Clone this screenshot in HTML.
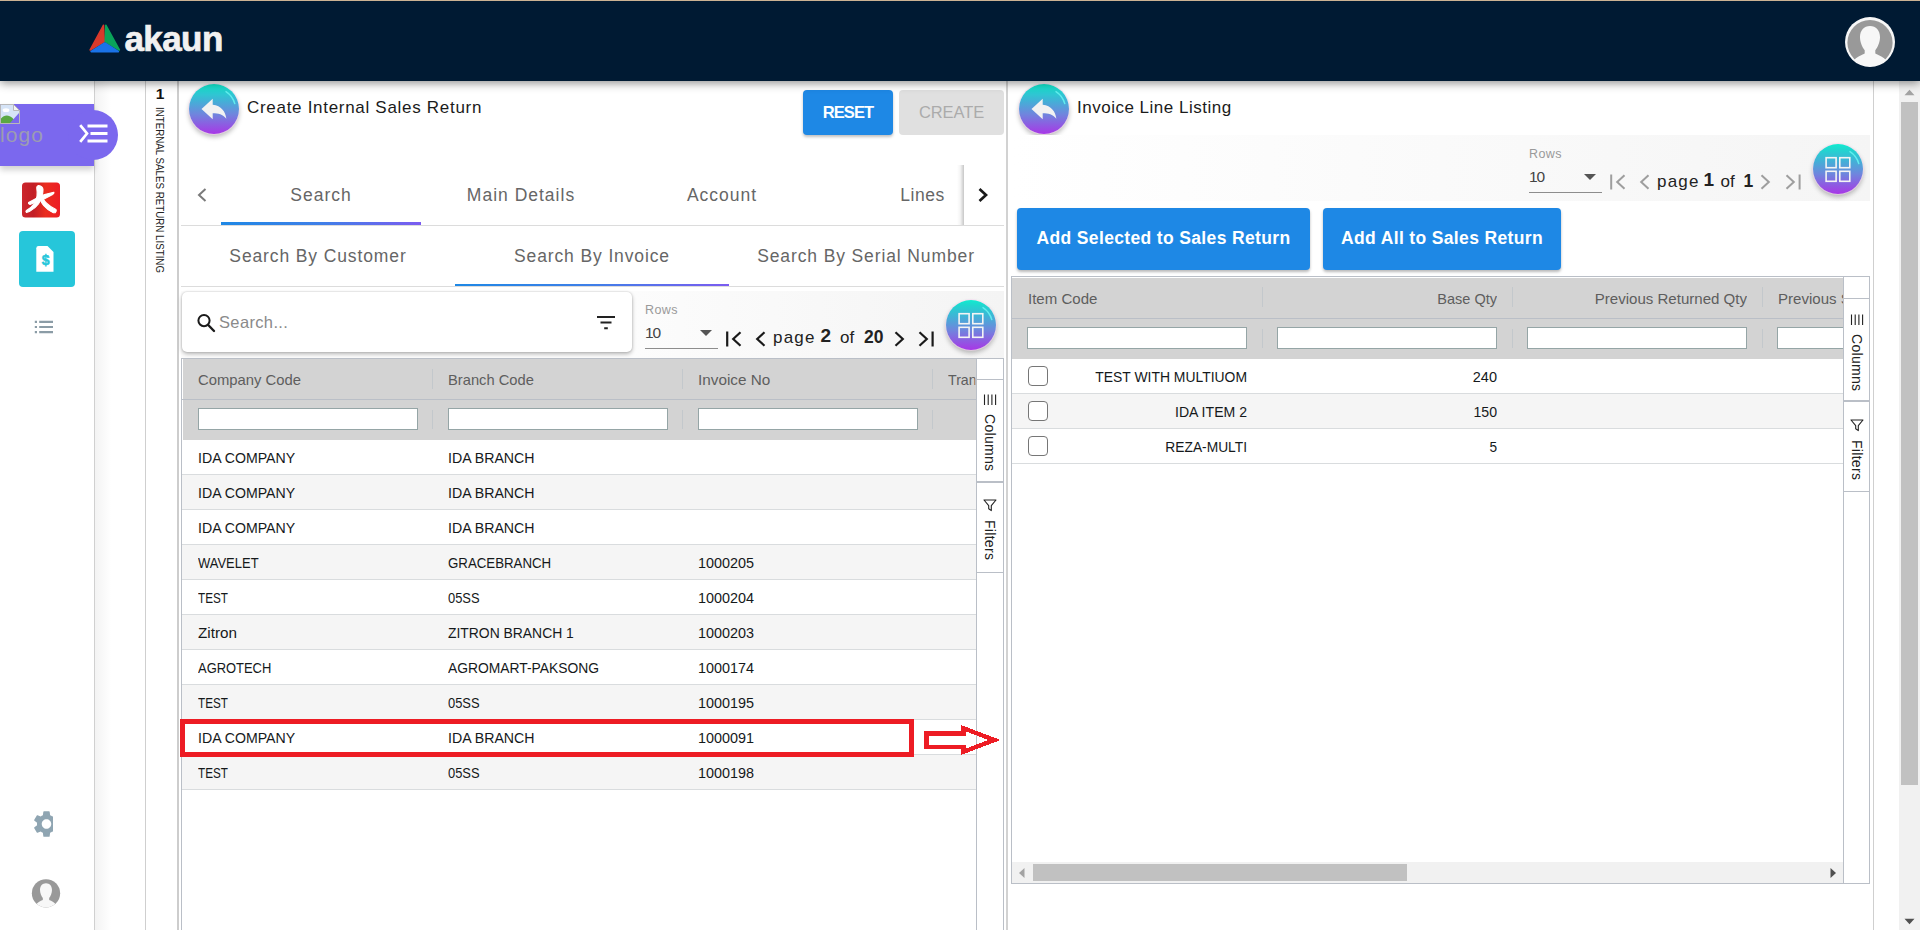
<!DOCTYPE html>
<html lang="en">
<head>
<meta charset="utf-8">
<title>Create Internal Sales Return</title>
<style>
*{box-sizing:border-box;margin:0;padding:0}
html,body{width:1920px;height:930px;overflow:hidden;background:#fff}
body{font-family:"Liberation Sans",sans-serif;color:#1a1a1a;position:relative}
.abs{position:absolute}
/* header */
#hdr{position:absolute;left:0;top:0;width:1920px;height:81px;background:#001a33;border-top:1px solid #cbb293;box-shadow:0 2px 9px rgba(0,0,0,.45);z-index:20}
#brand{position:absolute;left:124.5px;top:16px;font-weight:bold;font-size:35px;line-height:44px;color:#f1f1f1;letter-spacing:-.6px;-webkit-text-stroke:.7px #f1f1f1}
/* sidebar */
#side{position:absolute;left:0;top:81px;width:95px;height:849px;background:#fff;border-right:1px solid #d0d0d0}
#col2{position:absolute;left:95px;top:81px;width:51px;height:849px;background:linear-gradient(90deg,#f3f3f3 0,#fff 16px);border-right:1px solid #cfcfcf}
#col3{position:absolute;left:146px;top:81px;width:33px;height:849px;background:#fff;border-right:2px solid #cdcdcd}
#purple{position:absolute;left:0;top:104px;width:94px;height:62px;background:#7b68ee;box-shadow:0 4px 6px rgba(0,0,0,.18)}
#purpleR{position:absolute;left:68px;top:110px;width:50px;height:50px;border-radius:25px;background:#7b68ee}
.vtxt{position:absolute;writing-mode:vertical-rl;white-space:nowrap}
/* panels */
.circle{position:absolute;width:50px;height:50px;border-radius:50%;background:linear-gradient(180deg,#10ecd0 0%,#1fd8cf 10%,#3fb4d6 32%,#6f86dd 60%,#a837e6 100%);box-shadow:0 0 0 1px rgba(245,215,240,.55),0 3px 5px rgba(0,0,0,.28)}
.title{position:absolute;font-size:17px;line-height:24px;color:#1b1b1b;white-space:nowrap}
.btn{position:absolute;border-radius:4px;font-weight:bold;text-align:center;white-space:nowrap}
.tab{position:absolute;text-align:center;color:#666;font-size:17.5px;white-space:nowrap;letter-spacing:1px}
/* grid */
.grid{position:absolute;border:1px solid #babfc7;background:#fff;overflow:hidden}
.ghead{position:absolute;left:0;top:0;background:#d3d3d3}
.hcell{position:absolute;top:0;height:40px;line-height:42px;font-size:14.5px;color:#5e5e5e;white-space:nowrap;overflow:hidden}
.sep{position:absolute;width:1px;background:#c3c8cc}
.finp{position:absolute;height:22px;background:#fff;border:1px solid #95a5a6}
.row{position:absolute;left:0;height:35px;border-bottom:1px solid #d9dcde;font-size:14.5px;line-height:36px;color:#15191b;white-space:nowrap}
.row.odd{background:#f5f5f5}
.row span{position:absolute;top:0}
.cb{position:absolute;left:16px;top:7px;width:20px;height:20px;border:1.5px solid #767676;border-radius:4px;background:#fff}
.sidep{position:absolute;top:0;width:27px;background:#fff;border-left:1px solid #babfc7}
.sbtn{position:absolute;left:0;width:26px;border-bottom:1px solid #babfc7}
.pgtxt{position:absolute;font-size:17px;line-height:22px;color:#222;white-space:nowrap}
</style>
</head>
<body>
<!-- HEADER -->
<div id="hdr">
  <svg class="abs" style="left:88.75px;top:23.3px" width="32.5" height="31" viewBox="0 0 34 31" preserveAspectRatio="none">
    <path d="M15.2 1.2 L1.2 26.0 L16.0 17.6 Z" fill="#d93a2b" stroke="#d93a2b" stroke-width="1.6" stroke-linejoin="round"/>
    <path d="M17.6 1.2 L31.8 26.0 L17.0 17.6 Z" fill="#0aa45a" stroke="#0aa45a" stroke-width="1.6" stroke-linejoin="round"/>
    <path d="M16.5 19.2 L2.4 27.6 L30.6 27.6 Z" fill="#1a73e8" stroke="#1a73e8" stroke-width="2" stroke-linejoin="round"/>
  </svg>
  <div id="brand">akaun</div>
  <svg class="abs" style="left:1845px;top:16px" width="50" height="50" viewBox="0 0 50 50">
    <defs><clipPath id="avc"><circle cx="25" cy="25" r="24.2"/></clipPath></defs>
    <circle cx="25" cy="25" r="25" fill="#f7f7f7"/>
    <circle cx="25" cy="25.7" r="22.6" fill="#999"/>
    <path clip-path="url(#avc)" fill="#f7f7f7" d="M25 8.9 C31 8.9 35 13.5 35 20 C35 25.5 32.6 30.2 30.3 33.2 L30.3 36.6 C34.5 38.4 38.500 40.2 41.5 43.8 L41.5 52 L8.500 52 L8.500 43.8 C11.5 40.2 15.500 38.4 19.700 36.6 L19.700 33.2 C17.4 30.2 15 25.5 15 20 C15 13.5 19 8.9 25 8.9 Z"/>
  </svg>
</div>

<!-- SIDEBAR -->
<div id="side"></div>
<div id="col2"></div>
<div id="col3"></div>
<div id="purple"></div>
<div id="purpleR"></div>

<!-- SIDEBAR CONTENT -->
<svg class="abs" style="left:0;top:104px" width="20" height="20" viewBox="0 0 20 20">
 <path d="M0.5 0.5 H13.5 L19.5 6.5 V19.5 H0.5 Z" fill="#d6e4f7" stroke="#b9b9b9" stroke-width="1"/>
 <path d="M13.5 0.5 V6.5 H19.5 Z" fill="#f4f4f4" stroke="#b9b9b9" stroke-width="1" stroke-linejoin="round"/>
 <ellipse cx="6" cy="6.2" rx="3.4" ry="1.9" fill="#fff"/>
 <path d="M1 19 V14.5 C4 10.5 9 10.5 12.5 14 L17 19 Z" fill="#5aa843"/>
 <path d="M19 9 L10 19 H19 Z" fill="#7b68ee"/>
</svg>
<div class="abs" style="left:0;top:122px;font-size:21px;line-height:26px;color:#9c9cb2;letter-spacing:1.1px">logo</div>
<svg class="abs" style="left:78px;top:122px" width="32" height="24" viewBox="0 0 32 24">
 <path d="M2.2 3.2 L9 11.5 L2.2 19.8" fill="none" stroke="#fff" stroke-width="2.7"/>
 <path d="M9.5 4 H29.5 M12.5 11.5 H29.5 M9.5 19 H29.5" stroke="#fff" stroke-width="2.9" fill="none"/>
</svg>
<svg class="abs" style="left:22px;top:182px" width="38" height="36" viewBox="0 0 38 36">
 <defs><linearGradient id="rg" x1="0" y1="0" x2="1" y2="0"><stop offset="0" stop-color="#cc262c"/><stop offset=".3" stop-color="#c21e25"/><stop offset=".62" stop-color="#ea2d1f"/><stop offset="1" stop-color="#ed1c24"/></linearGradient></defs>
 <rect x="0" y="0.5" width="38" height="35" rx="3.5" fill="url(#rg)"/>
 <g fill="#fff" stroke="#fff" stroke-width="1.1" stroke-linejoin="round">
  <path d="M16.6 3.6 C19 4 20.8 5 21 7.5 C21.2 10.5 20.4 13 19.6 15.2 C18.8 17.6 18 19.8 16.6 21.8 C14.4 25 11.2 27.6 7.4 29.4 L4.4 30.4 C3.8 29.8 3.8 29 4.4 28.4 C7.400 26.8 10.2 24.4 12.4 21.2 C13.8 19 14.6 16.6 15 14 C15.3 11.6 15.2 9 14.8 6.600 C14.6 5.200 15.2 4 16.6 3.600 Z"/>
  <path d="M6.600 20.6 L14.6 16.2 C17.2 14.8 19.8 13.600 22.600 12.600 L31.800 10.2 C32.2 10.600 31.800 11.600 30.6 12.4 L23 16.4 C20.6 17.600 17.800 18.800 15 19.800 L8 22.4 C6.800 22.4 6.200 21.4 6.600 20.6 Z"/>
  <path d="M18 17.4 L21 16.4 C22 18.2 23.2 19.800 24.6 21.2 C27.2 23.800 30.4 26 34 27.400 C34.6 28.600 34.2 30 33.4 30.600 L31.4 30.800 C27.600 29 24.200 26.400 21.600 23.400 C20.400 22 19.200 20.200 18 17.400 Z"/>
 </g>
</svg>
<div class="abs" style="left:19px;top:231px;width:56px;height:56px;border-radius:4px;background:#26c6da"></div>
<svg class="abs" style="left:36px;top:246px" width="18" height="26" viewBox="0 0 18 26">
 <path d="M2.5 0 H11.5 L17.5 6 V25.8 H0.3 V2.2 Q0.3 0 2.5 0 Z" fill="#fff"/>
 <text x="9.6" y="19" text-anchor="middle" font-family="Liberation Sans, sans-serif" font-weight="bold" font-size="14" fill="#26c6da" stroke="#26c6da" stroke-width=".5">$</text>
</svg>
<svg class="abs" style="left:34px;top:320px" width="20" height="14" viewBox="0 0 20 14">
 <path d="M5.2 1.8 H19 M5.2 7 H19 M5.2 12.2 H19" stroke="#8b9ca6" stroke-width="2.2"/>
 <path d="M0.8 1.8 H3 M0.8 7 H3 M0.8 12.2 H3" stroke="#8b9ca6" stroke-width="2.2"/>
</svg>
<svg class="abs" style="left:31px;top:808px" width="22" height="32" viewBox="0 0 22 32">
 <path transform="translate(-0.34,0.16) scale(1.32)" fill="#8fa5b2" d="M19.14 12.94c.04-.3.06-.61.06-.94 0-.32-.02-.64-.07-.94l2.030-1.580c.18-.14.23-.41.12-.61l-1.920-3.320c-.12-.22-.37-.29-.59-.22l-2.390.96c-.5-.38-1.030-.7-1.620-.94l-.36-2.540c-.04-.24-.24-.41-.48-.41h-3.840c-.24 0-.43.17-.47.41l-.36 2.540c-.59.24-1.130.57-1.620.94l-2.390-.96c-.22-.08-.47 0-.59.22L2.740 8.870c-.12.21-.08.47.12.61l2.030 1.580c-.05.3-.09.63-.09.94s.02.64.07.94l-2.030 1.580c-.18.14-.23.41-.12.61l1.920 3.320c.12.22.37.29.59.22l2.390-.96c.5.38 1.030.7 1.620.94l.36 2.540c.05.24.24.41.48.41h3.840c.24 0 .44-.17.47-.41l.36-2.540c.59-.24 1.130-.56 1.620-.94l2.390.96c.22.08.47 0 .59-.22l1.920-3.320c.12-.22.07-.47-.12-.61l-2.010-1.580zM12 15.600c-1.980 0-3.600-1.620-3.600-3.600s1.620-3.600 3.600-3.600 3.600 1.620 3.600 3.600-1.620 3.600-3.600 3.600z"/>
</svg>
<svg class="abs" style="left:31px;top:877.500px" width="30" height="30" viewBox="0 0 50 50">
 <defs><clipPath id="uc"><circle cx="25" cy="25.5" r="23.6"/></clipPath></defs>
 <circle cx="25" cy="25.500" r="23.6" fill="#999"/>
 <path clip-path="url(#uc)" fill="#f7f7f7" d="M25 8.900 C31 8.900 35 13.500 35 20 C35 25.500 32.6 30.2 30.3 33.2 L30.3 36.6 C34.500 38.4 38.500 40.2 41.500 43.800 L41.500 52 L8.500 52 L8.500 43.800 C11.500 40.2 15.500 38.4 19.700 36.6 L19.700 33.2 C17.4 30.2 15 25.500 15 20 C15 13.500 19 8.900 25 8.900 Z"/>
</svg>
<div class="abs" style="left:154px;top:85px;width:12px;text-align:center;font-weight:bold;font-size:15.5px;line-height:18px;color:#111">1</div>
<div class="vtxt" style="left:153px;top:107px;font-size:11.5px;line-height:14px;color:#222;transform:scaleY(.848);transform-origin:50% 0">INTERNAL SALES RETURN LISTING</div>
<!-- LEFT PANEL -->
<div id="left">
  <div class="circle" style="left:189px;top:84px">
    <svg class="abs" style="left:0;top:0" width="50" height="50" viewBox="0 0 50 50">
      <path d="M37 7.6 A21.2 21.2 0 0 1 45.8 19.6" fill="none" stroke="#66f2f0" stroke-opacity=".9" stroke-width="1.5" stroke-linecap="round"/>
      <path fill="#f2f2f2" d="M23.7 20.8 V14.8 L12.5 24.9 L23.7 35.2 V29.2 C29.5 29.2 33.6 30.3 37.4 34.7 C36.2 27.5 32.5 21.8 23.7 20.8 Z"/>
    </svg>
  </div>
  <div class="title" style="left:247px;top:96px;letter-spacing:.7px">Create Internal Sales Return</div>
  <div class="btn" style="left:803px;top:90px;width:90px;height:45px;line-height:45px;background:#1e88e5;color:#fff;font-size:16.5px;letter-spacing:-.9px;box-shadow:0 2px 3px rgba(0,0,0,.25)">RESET</div>
  <div class="btn" style="left:899px;top:90px;width:105px;height:45px;line-height:45px;background:#e0e0e0;color:#ababab;font-size:16.5px;font-weight:normal;letter-spacing:-.1px">CREATE</div>

  <!-- main tabs -->
  <div class="abs" style="left:181px;top:225px;width:823px;height:1px;background:#dcdcdc"></div>
  <svg class="abs" style="left:194px;top:186px" width="16" height="18" viewBox="0 0 16 18"><path d="M11.5 3 L5 9 L11.5 15" fill="none" stroke="#7a7a7a" stroke-width="2"/></svg>
  <div class="tab" style="left:221px;top:184px;width:200px;line-height:22px">Search</div>
  <div class="tab" style="left:421px;top:184px;width:200px;line-height:22px">Main Details</div>
  <div class="tab" style="left:622px;top:184px;width:200px;line-height:22px">Account</div>
  <div class="tab" style="left:822.5px;top:184px;width:200px;line-height:22px;letter-spacing:.55px">Lines</div>
  <div class="abs" style="left:221px;top:222px;width:200px;height:3px;background:linear-gradient(90deg,#1e88e5 0%,#3f7fe8 50%,#7b5cf0 100%)"></div>
  <div class="abs" style="left:964px;top:165px;width:40px;height:60px;background:#fff"></div>
  <div class="abs" style="left:957px;top:165px;width:7px;height:60px;background:linear-gradient(90deg,rgba(0,0,0,0) 0%,rgba(0,0,0,.04) 45%,rgba(0,0,0,.22) 100%)"></div>
  <svg class="abs" style="left:975px;top:186px" width="16" height="18" viewBox="0 0 16 18"><path d="M4.5 3 L11 9 L4.5 15" fill="none" stroke="#1a1a1a" stroke-width="2.7"/></svg>

  <!-- sub tabs -->
  <div class="abs" style="left:181px;top:286px;width:823px;height:1px;background:#dcdcdc"></div>
  <div class="tab" style="left:181px;top:245px;width:274px;line-height:22px;letter-spacing:.88px">Search By Customer</div>
  <div class="tab" style="left:455px;top:245px;width:274px;line-height:22px;letter-spacing:.88px">Search By Invoice</div>
  <div class="tab" style="left:729px;top:245px;width:274px;line-height:22px;letter-spacing:.88px">Search By Serial Number</div>
  <div class="abs" style="left:455px;top:284px;width:274px;height:2px;background:linear-gradient(90deg,#1e88e5 0%,#3f7fe8 50%,#7b5cf0 100%)"></div>

  <!-- search + pagination strip -->
  <div class="abs" style="left:181px;top:291px;width:823px;height:67px;background:linear-gradient(90deg,#fcfcfc 0%,#fcfcfc 55%,#f4f4f4 100%)"></div>
  <div class="abs" style="left:182px;top:292px;width:450px;height:60px;background:#fff;border-radius:5px;box-shadow:0 2px 4px rgba(0,0,0,.28),0 0 2px rgba(0,0,0,.18)"></div>
  <svg class="abs" style="left:195px;top:312px" width="22" height="22" viewBox="0 0 22 22"><circle cx="9" cy="8.6" r="5.6" fill="none" stroke="#1a1a1a" stroke-width="2"/><path d="M13.2 13 L19 19" stroke="#1a1a1a" stroke-width="2.4" stroke-linecap="round"/></svg>
  <div class="abs" style="left:219px;top:311px;font-size:16.5px;line-height:22px;color:#8a8a8a;letter-spacing:.35px">Search...</div>
  <svg class="abs" style="left:596px;top:315px" width="20" height="16" viewBox="0 0 20 16"><path d="M1 2 H19 M4.5 7.6 H15.5 M8.2 13.2 H11.8" stroke="#222" stroke-width="2" fill="none"/></svg>

  <div class="abs" style="left:645px;top:303px;font-size:12.5px;line-height:14px;color:#9a9a9a;letter-spacing:.4px">Rows</div>
  <div class="abs" style="left:645px;top:324px;font-size:15.5px;line-height:18px;color:#444;letter-spacing:-1px">10</div>
  <svg class="abs" style="left:699px;top:329.2px" width="14" height="8" viewBox="0 0 14 8"><path d="M1 1 H13 L7 7 Z" fill="#555"/></svg>
  <div class="abs" style="left:645px;top:348px;width:73px;height:1px;background:#8d8d8d"></div>

  <svg class="abs" style="left:724.5px;top:328.5px" width="20" height="20" viewBox="0 0 20 20"><path d="M2.2 2.5 V17.5" stroke="#1a1a1a" stroke-width="2.2"/><path d="M15.5 3.2 L8.2 10 L15.5 16.8" fill="none" stroke="#1a1a1a" stroke-width="2.2"/></svg>
  <svg class="abs" style="left:752px;top:328.5px" width="16" height="20" viewBox="0 0 16 20"><path d="M12.5 3.2 L5.2 10 L12.5 16.8" fill="none" stroke="#1a1a1a" stroke-width="2.2"/></svg>
  <div class="pgtxt" style="left:773px;top:327px;letter-spacing:1.2px">page</div>
  <div class="pgtxt" style="left:820.5px;top:325px;font-weight:bold;font-size:19px">2</div>
  <div class="pgtxt" style="left:840px;top:327px">of</div>
  <div class="pgtxt" style="left:864px;top:326px;font-weight:bold;font-size:17.5px">20</div>
  <svg class="abs" style="left:891.7px;top:328.5px" width="16" height="20" viewBox="0 0 16 20"><path d="M3.5 3.2 L10.8 10 L3.5 16.8" fill="none" stroke="#1a1a1a" stroke-width="2.2"/></svg>
  <svg class="abs" style="left:914.5px;top:328.5px" width="20" height="20" viewBox="0 0 20 20"><path d="M17.6 2.5 V17.5" stroke="#1a1a1a" stroke-width="2.2"/><path d="M4.5 3.2 L11.8 10 L4.5 16.8" fill="none" stroke="#1a1a1a" stroke-width="2.2"/></svg>

  <div class="circle" style="left:946px;top:299.5px">
    <svg class="abs" style="left:0;top:0" width="50" height="50" viewBox="0 0 50 50">
      <path d="M37 7.6 A21.2 21.2 0 0 1 45.8 19.6" fill="none" stroke="#66f2f0" stroke-opacity=".9" stroke-width="1.5" stroke-linecap="round"/>
      <g fill="none" stroke="#f4f4f4" stroke-width="1.6"><rect x="13.1" y="13.7" width="10" height="10"/><rect x="26.8" y="13.7" width="10" height="10"/><rect x="13.1" y="27.3" width="10" height="10"/><rect x="26.8" y="27.3" width="10" height="10"/></g>
    </svg>
  </div>
</div>
<!-- LEFT GRID -->
<div class="grid" id="lgrid" style="left:181px;top:358px;width:823px;height:600px">
 <div class="ghead" style="left:1px;width:793px;height:81px"></div>
 <div class="abs" style="left:0;top:40px;width:794px;height:1px;background:#babfc7"></div>
 <div class="hcell" style="left:16px;width:230px;transform:scaleX(1.022);transform-origin:0 50%">Company Code</div>
 <div class="hcell" style="left:266px;width:230px;transform:scaleX(1.014);transform-origin:0 50%">Branch Code</div>
 <div class="hcell" style="left:516px;width:230px;transform:scaleX(1.055);transform-origin:0 50%">Invoice No</div>
 <div class="hcell" style="left:766px;width:28px;transform:scaleX(0.977);transform-origin:0 50%">Tran</div>
 <div class="sep" style="left:250px;top:10px;height:20px"></div>
 <div class="sep" style="left:250px;top:51px;height:19px"></div>
 <div class="sep" style="left:500px;top:10px;height:20px"></div>
 <div class="sep" style="left:500px;top:51px;height:19px"></div>
 <div class="sep" style="left:750px;top:10px;height:20px"></div>
 <div class="sep" style="left:750px;top:51px;height:19px"></div>
 <div class="finp" style="left:16px;top:49px;width:220px"></div>
 <div class="finp" style="left:266px;top:49px;width:220px"></div>
 <div class="finp" style="left:516px;top:49px;width:220px"></div>
 <div class="row" style="top:81px;width:794px"><span style="left:16px;transform:scaleX(0.975);transform-origin:0 50%">IDA COMPANY</span><span style="left:266px;transform:scaleX(0.976);transform-origin:0 50%">IDA BRANCH</span><span style="left:516px"></span></div>
 <div class="row odd" style="top:116px;width:794px"><span style="left:16px;transform:scaleX(0.975);transform-origin:0 50%">IDA COMPANY</span><span style="left:266px;transform:scaleX(0.976);transform-origin:0 50%">IDA BRANCH</span><span style="left:516px"></span></div>
 <div class="row" style="top:151px;width:794px"><span style="left:16px;transform:scaleX(0.975);transform-origin:0 50%">IDA COMPANY</span><span style="left:266px;transform:scaleX(0.976);transform-origin:0 50%">IDA BRANCH</span><span style="left:516px"></span></div>
 <div class="row odd" style="top:186px;width:794px"><span style="left:16px;transform:scaleX(0.895);transform-origin:0 50%">WAVELET</span><span style="left:266px;transform:scaleX(0.915);transform-origin:0 50%">GRACEBRANCH</span><span style="left:516px;transform:scaleX(0.992);transform-origin:0 50%">1000205</span></div>
 <div class="row" style="top:221px;width:794px"><span style="left:16px;transform:scaleX(0.809);transform-origin:0 50%">TEST</span><span style="left:266px;transform:scaleX(0.891);transform-origin:0 50%">05SS</span><span style="left:516px;transform:scaleX(0.992);transform-origin:0 50%">1000204</span></div>
 <div class="row odd" style="top:256px;width:794px"><span style="left:16px;transform:scaleX(1.052);transform-origin:0 50%">Zitron</span><span style="left:266px;transform:scaleX(0.958);transform-origin:0 50%">ZITRON BRANCH 1</span><span style="left:516px;transform:scaleX(0.992);transform-origin:0 50%">1000203</span></div>
 <div class="row" style="top:291px;width:794px"><span style="left:16px;transform:scaleX(0.892);transform-origin:0 50%">AGROTECH</span><span style="left:266px;transform:scaleX(0.955);transform-origin:0 50%">AGROMART-PAKSONG</span><span style="left:516px;transform:scaleX(0.992);transform-origin:0 50%">1000174</span></div>
 <div class="row odd" style="top:326px;width:794px"><span style="left:16px;transform:scaleX(0.809);transform-origin:0 50%">TEST</span><span style="left:266px;transform:scaleX(0.891);transform-origin:0 50%">05SS</span><span style="left:516px;transform:scaleX(0.992);transform-origin:0 50%">1000195</span></div>
 <div class="row" style="top:361px;width:794px"><span style="left:16px;transform:scaleX(0.975);transform-origin:0 50%">IDA COMPANY</span><span style="left:266px;transform:scaleX(0.976);transform-origin:0 50%">IDA BRANCH</span><span style="left:516px;transform:scaleX(0.992);transform-origin:0 50%">1000091</span></div>
 <div class="row odd" style="top:396px;width:794px"><span style="left:16px;transform:scaleX(0.809);transform-origin:0 50%">TEST</span><span style="left:266px;transform:scaleX(0.891);transform-origin:0 50%">05SS</span><span style="left:516px;transform:scaleX(0.992);transform-origin:0 50%">1000198</span></div>
 <div class="sidep" style="left:794px;height:600px">
  <div class="sbtn" style="top:20px;height:103px;border-top:1px solid #babfc7"></div>
  <div class="sbtn" style="top:123px;height:91px;border-top:1px solid #babfc7"></div>
  <svg class="abs" style="left:6px;top:35px" width="14" height="12" viewBox="0 0 14 12"><path d="M1.5 0.5 V11 M5.2 0.5 V11 M8.9 0.5 V11 M12.6 0.5 V11" stroke="#222" stroke-width="1.1"/></svg>
  <div class="vtxt" style="left:4px;top:55px;font-size:14px;line-height:18px;color:#222;letter-spacing:.3px">Columns</div>
  <svg class="abs" style="left:6px;top:140px" width="14" height="13" viewBox="0 0 14 13"><path d="M1 1 H13 L8.3 6.6 V11.6 L5.7 9.8 V6.6 Z" fill="none" stroke="#222" stroke-width="1.1" stroke-linejoin="round"/></svg>
  <div class="vtxt" style="left:4px;top:161px;font-size:14px;line-height:18px;color:#222;letter-spacing:.3px">Filters</div>
 </div>
</div>
<div class="abs" style="left:180px;top:719px;width:734px;height:38px;border:5px solid #ed1c24"></div>
<svg class="abs" style="left:920px;top:720px" width="86" height="40" viewBox="920 720 86 40" shape-rendering="crispEdges"><path fill="#ed1c24" fill-rule="evenodd" d="M924 731 H961 V725 L1000.5 740 L961 755 V749 H924 Z M928.5 735.5 V744.5 H965.5 V748.8 L988 740 L965.5 731.2 V735.5 Z"/></svg>
<!-- RIGHT PANEL -->
<div class="abs" style="left:1006px;top:81px;width:2px;height:849px;background:#d2d2d2"></div>
<div class="abs" style="left:1873px;top:81px;width:1px;height:849px;background:#cfcfcf"></div>
<div class="circle" style="left:1019px;top:84px">
  <svg class="abs" style="left:0;top:0" width="50" height="50" viewBox="0 0 50 50">
    <path d="M37 7.6 A21.2 21.2 0 0 1 45.8 19.6" fill="none" stroke="#66f2f0" stroke-opacity=".9" stroke-width="1.5" stroke-linecap="round"/>
    <path fill="#f2f2f2" d="M23.7 20.8 V14.8 L12.5 24.9 L23.7 35.2 V29.2 C29.5 29.2 33.6 30.3 37.4 34.7 C36.2 27.5 32.5 21.8 23.7 20.8 Z"/>
  </svg>
</div>
<div class="title" style="left:1077px;top:96px;letter-spacing:.5px">Invoice Line Listing</div>
<div class="abs" style="left:1012px;top:135px;width:858px;height:66px;background:linear-gradient(90deg,#fff 0%,#fbfbfb 40%,#f5f5f5 100%)"></div>
<div class="abs" style="left:1529px;top:147px;font-size:12.5px;line-height:14px;color:#9a9a9a;letter-spacing:.4px">Rows</div>
<div class="abs" style="left:1529px;top:168px;font-size:15.5px;line-height:18px;color:#444;letter-spacing:-1px">10</div>
<svg class="abs" style="left:1583px;top:173.2px" width="14" height="8" viewBox="0 0 14 8"><path d="M1 1 H13 L7 7 Z" fill="#555"/></svg>
<div class="abs" style="left:1529px;top:192px;width:73px;height:1px;background:#8d8d8d"></div>
<svg class="abs" style="left:1608.5px;top:172.4px" width="20" height="20" viewBox="0 0 20 20"><path d="M2.2 2.5 V17.5" stroke="#9e9e9e" stroke-width="2"/><path d="M15.5 3.2 L8.2 10 L15.5 16.8" fill="none" stroke="#9e9e9e" stroke-width="2"/></svg>
<svg class="abs" style="left:1636px;top:172.4px" width="16" height="20" viewBox="0 0 16 20"><path d="M12.5 3.2 L5.2 10 L12.5 16.8" fill="none" stroke="#9e9e9e" stroke-width="2"/></svg>
<div class="pgtxt" style="left:1657px;top:171px;letter-spacing:1.2px">page</div>
<div class="pgtxt" style="left:1703.5px;top:169px;font-weight:bold;font-size:19px">1</div>
<div class="pgtxt" style="left:1720.5px;top:171px">of</div>
<div class="pgtxt" style="left:1743.5px;top:170px;font-weight:bold;font-size:17.5px">1</div>
<svg class="abs" style="left:1758px;top:172.4px" width="16" height="20" viewBox="0 0 16 20"><path d="M3.5 3.2 L10.8 10 L3.5 16.8" fill="none" stroke="#9e9e9e" stroke-width="2"/></svg>
<svg class="abs" style="left:1781.5px;top:172.4px" width="20" height="20" viewBox="0 0 20 20"><path d="M17.6 2.5 V17.5" stroke="#9e9e9e" stroke-width="2"/><path d="M4.5 3.2 L11.8 10 L4.5 16.8" fill="none" stroke="#9e9e9e" stroke-width="2"/></svg>
<div class="circle" style="left:1813px;top:143.5px">
  <svg class="abs" style="left:0;top:0" width="50" height="50" viewBox="0 0 50 50">
    <path d="M37 7.6 A21.2 21.2 0 0 1 45.8 19.6" fill="none" stroke="#66f2f0" stroke-opacity=".9" stroke-width="1.5" stroke-linecap="round"/>
    <g fill="none" stroke="#f4f4f4" stroke-width="1.6"><rect x="13.1" y="13.7" width="10" height="10"/><rect x="26.8" y="13.7" width="10" height="10"/><rect x="13.1" y="27.3" width="10" height="10"/><rect x="26.8" y="27.3" width="10" height="10"/></g>
  </svg>
</div>
<div class="btn" style="left:1017px;top:208px;width:293px;height:62px;line-height:60px;background:#1e88e5;color:#fff;font-size:17.5px;letter-spacing:.35px;box-shadow:0 2px 3px rgba(0,0,0,.28)">Add Selected to Sales Return</div>
<div class="btn" style="left:1323px;top:208px;width:238px;height:62px;line-height:60px;background:#1e88e5;color:#fff;font-size:17.5px;letter-spacing:.35px;box-shadow:0 2px 3px rgba(0,0,0,.28)">Add All to Sales Return</div>
<div class="grid" id="rgrid" style="left:1011px;top:276px;width:859px;height:608px">
 <div class="ghead" style="top:1px;width:831px;height:81px"></div>
 <div class="abs" style="left:0;top:41px;width:831px;height:1px;background:#babfc7"></div>
 <div class="hcell" style="left:16px;top:1px;width:220px;transform:scaleX(1.037);transform-origin:0 50%">Item Code</div>
 <div class="hcell" style="left:266px;top:1px;width:219px;text-align:right;transform:scaleX(1.001);transform-origin:100% 50%">Base Qty</div>
 <div class="hcell" style="left:516px;top:1px;width:219px;text-align:right;transform:scaleX(1.038);transform-origin:100% 50%">Previous Returned Qty</div>
 <div class="hcell" style="left:766px;top:1px;width:65px;transform:scaleX(1.038);transform-origin:0 50%">Previous S</div>
 <div class="sep" style="left:250px;top:10px;height:20px"></div>
 <div class="sep" style="left:250px;top:52px;height:19px"></div>
 <div class="sep" style="left:500px;top:10px;height:20px"></div>
 <div class="sep" style="left:500px;top:52px;height:19px"></div>
 <div class="sep" style="left:750px;top:10px;height:20px"></div>
 <div class="sep" style="left:750px;top:52px;height:19px"></div>
 <div class="finp" style="left:15px;top:50px;width:220px"></div>
 <div class="finp" style="left:265px;top:50px;width:220px"></div>
 <div class="finp" style="left:515px;top:50px;width:220px"></div>
 <div class="finp" style="left:765px;top:50px;width:80px"></div>
 <div class="row" style="top:82px;width:831px;line-height:36px"><i class="cb"></i><span style="left:60px;width:175px;text-align:right;transform:scaleX(0.959);transform-origin:100% 50%">TEST WITH MULTIUOM</span><span style="left:266px;width:219px;text-align:right;transform:scaleX(1.000);transform-origin:100% 50%">240</span></div>
 <div class="row odd" style="top:117px;width:831px;line-height:36px"><i class="cb"></i><span style="left:60px;width:175px;text-align:right;transform:scaleX(0.971);transform-origin:100% 50%">IDA ITEM 2</span><span style="left:266px;width:219px;text-align:right;transform:scaleX(0.975);transform-origin:100% 50%">150</span></div>
 <div class="row" style="top:152px;width:831px;line-height:36px"><i class="cb"></i><span style="left:60px;width:175px;text-align:right;transform:scaleX(0.950);transform-origin:100% 50%">REZA-MULTI</span><span style="left:266px;width:219px;text-align:right;transform:scaleX(0.941);transform-origin:100% 50%">5</span></div>
 <div class="abs" style="left:0;top:585px;width:831px;height:21px;background:#f1f1f1"></div>
 <div class="abs" style="left:21px;top:587px;width:374px;height:17px;background:#c1c1c1"></div>
 <svg class="abs" style="left:6px;top:590px" width="8" height="12" viewBox="0 0 8 12"><path d="M6.5 1 V11 L1 6 Z" fill="#a3a3a3"/></svg>
 <svg class="abs" style="left:817px;top:590px" width="8" height="12" viewBox="0 0 8 12"><path d="M1.5 1 V11 L7 6 Z" fill="#505050"/></svg>
 <div class="sidep" style="left:831px;height:606px">
  <div class="sbtn" style="top:21px;height:103px;border-top:1px solid #babfc7"></div>
  <div class="sbtn" style="top:124px;height:91px;border-top:1px solid #babfc7"></div>
  <svg class="abs" style="left:6px;top:36.5px" width="14" height="12" viewBox="0 0 14 12"><path d="M1.5 0.5 V11 M5.2 0.5 V11 M8.9 0.5 V11 M12.6 0.5 V11" stroke="#222" stroke-width="1.1"/></svg>
  <div class="vtxt" style="left:4px;top:56.5px;font-size:14px;line-height:18px;color:#222;letter-spacing:.3px">Columns</div>
  <svg class="abs" style="left:6px;top:141.5px" width="14" height="13" viewBox="0 0 14 13"><path d="M1 1 H13 L8.3 6.6 V11.6 L5.7 9.8 V6.6 Z" fill="none" stroke="#222" stroke-width="1.1" stroke-linejoin="round"/></svg>
  <div class="vtxt" style="left:4px;top:162.5px;font-size:14px;line-height:18px;color:#222;letter-spacing:.3px">Filters</div>
 </div>
</div>
<div class="abs" style="left:1899px;top:81px;width:21px;height:849px;background:#f1f1f1"></div>
<div class="abs" style="left:1901px;top:102px;width:17px;height:683px;background:#c1c1c1"></div>
<svg class="abs" style="left:1904px;top:89px" width="11" height="7" viewBox="0 0 11 7"><path d="M0.5 6.2 H10.5 L5.5 0.8 Z" fill="#a3a3a3"/></svg>
<svg class="abs" style="left:1904px;top:918px" width="11" height="7" viewBox="0 0 11 7"><path d="M0.5 0.8 H10.5 L5.5 6.2 Z" fill="#505050"/></svg>
</body>
</html>
